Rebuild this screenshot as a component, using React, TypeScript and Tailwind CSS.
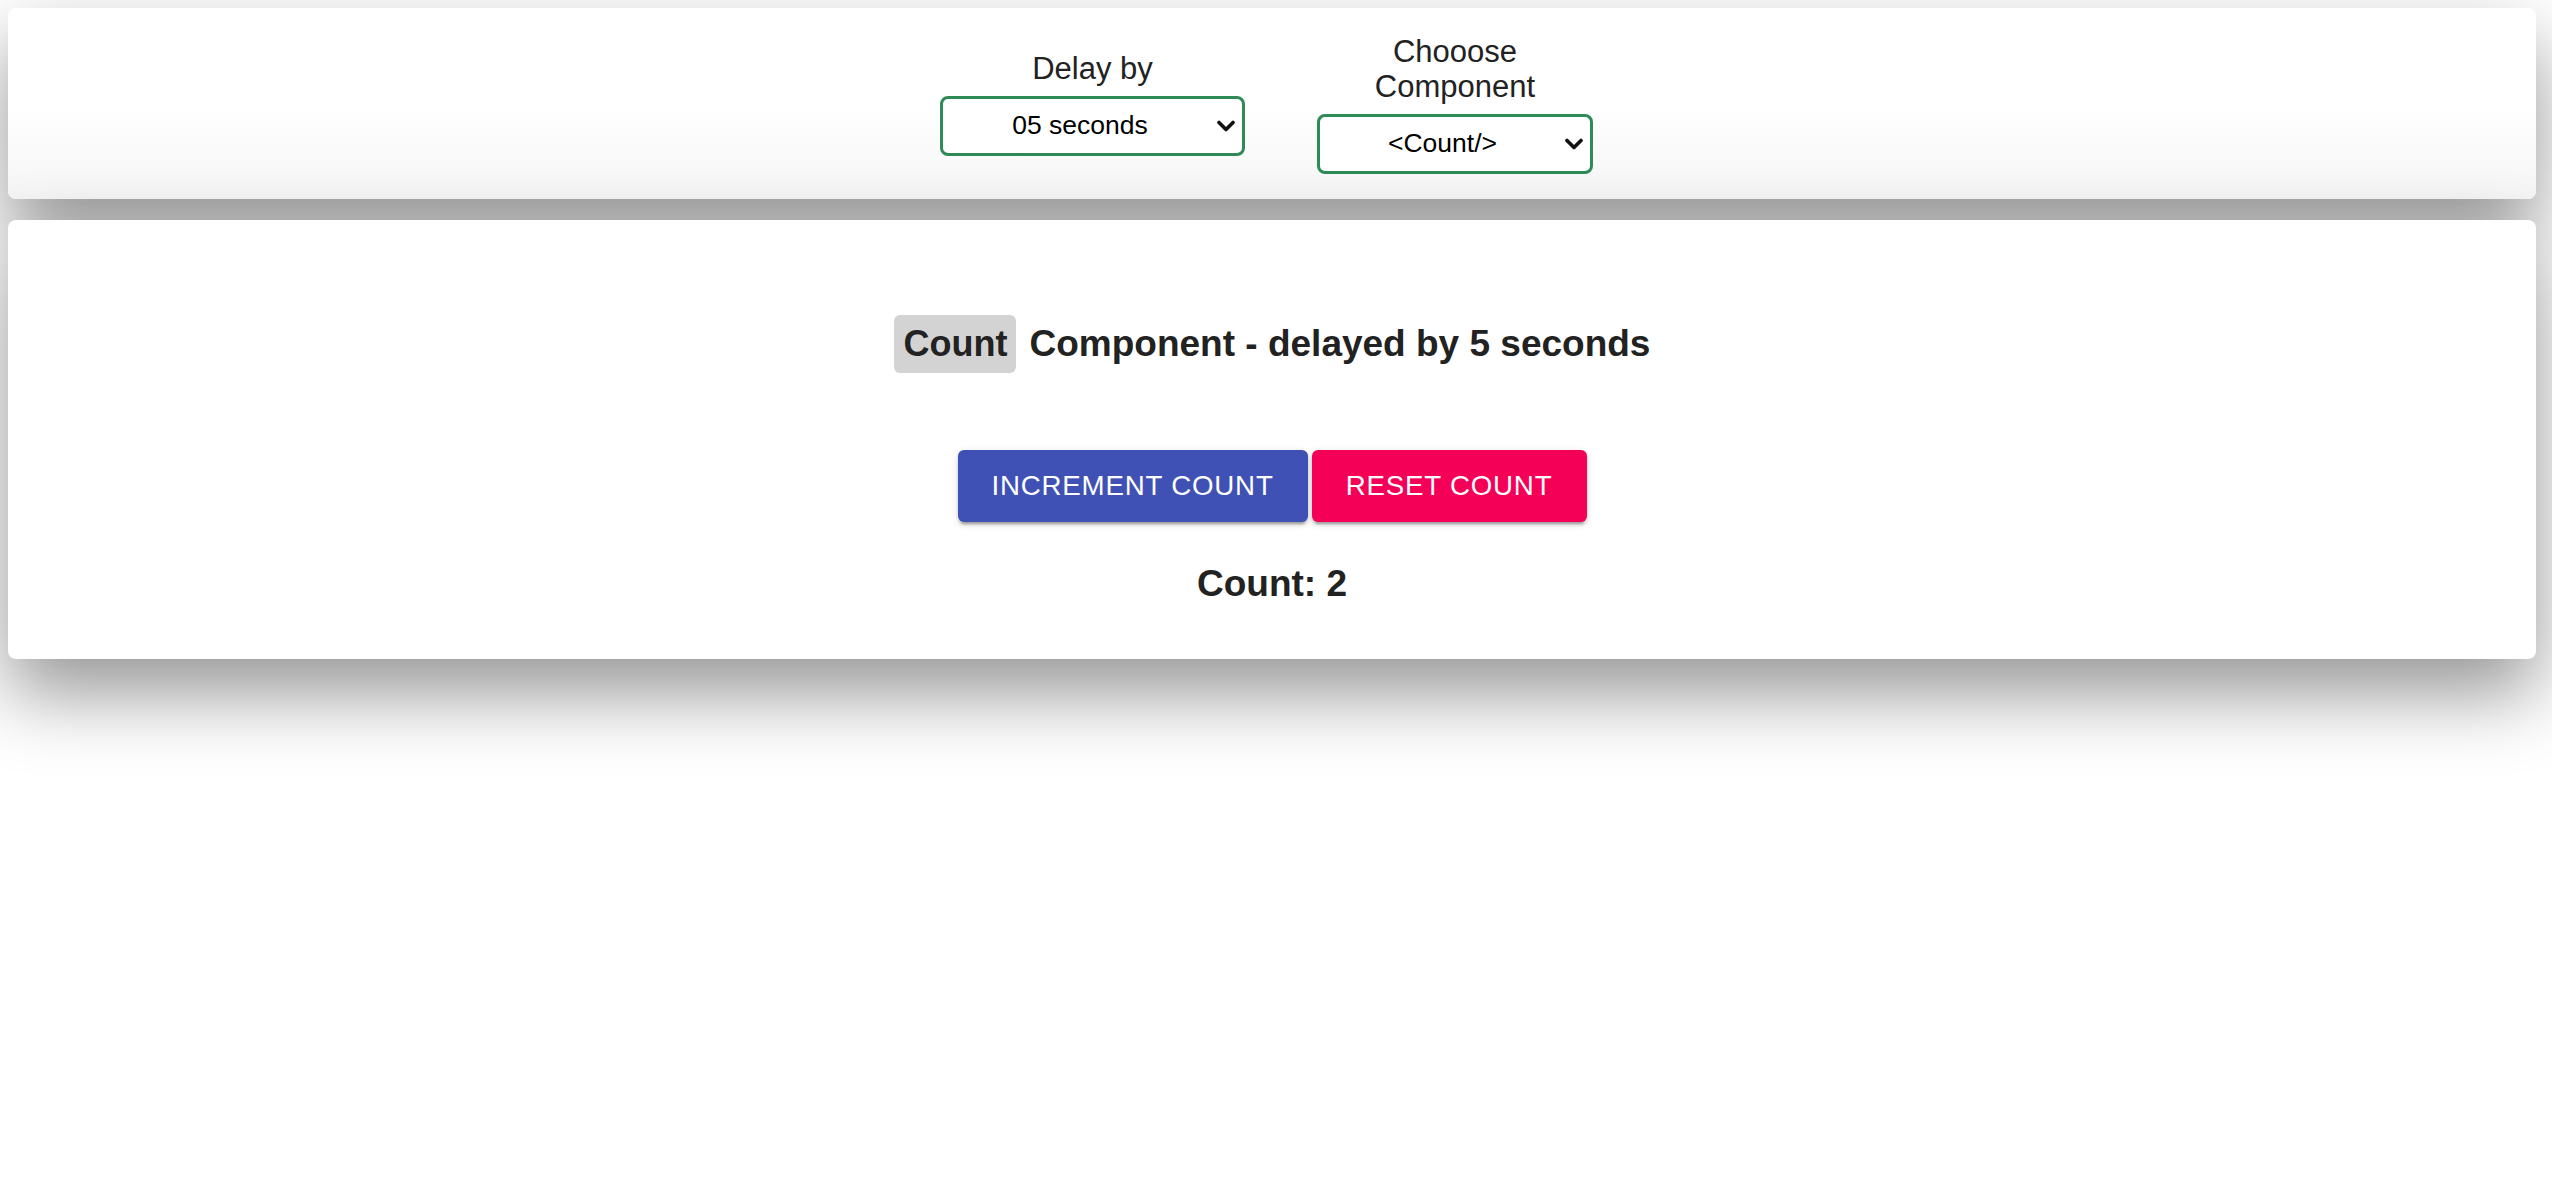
import { useState } from "react";

const font = { fontFamily: '"Liberation Sans", Arial, Helvetica, sans-serif' };

function Chevron() {
  return (
    <svg
      viewBox="0 0 18 12"
      className="pointer-events-none absolute right-[10px] top-1/2 h-[12px] w-[18px] -translate-y-1/2"
    >
      <path
        d="M2 2.5 L9 9.5 L16 2.5"
        fill="none"
        stroke="#111"
        strokeWidth="3.6"
        strokeLinecap="round"
        strokeLinejoin="round"
      />
    </svg>
  );
}

function Picker({
  label,
  value,
  options,
  width,
  onChange,
}: {
  label: string;
  value: string;
  options: { value: string; label: string }[];
  width: string;
  onChange: (v: string) => void;
}) {
  return (
    <div className={`flex flex-col items-center ${width}`}>
      <label className="text-center text-[31px] leading-[35px] text-[#222]">{label}</label>
      <div className="relative mt-[10px] w-full">
        <select
          value={value}
          onChange={(e) => onChange(e.target.value)}
          className="h-[60px] w-full appearance-none rounded-[8px] border-[3.5px] border-[#2e8b57] bg-white pl-[4px] pr-[29px] text-center text-[26.5px] text-black outline-none"
          style={font}
        >
          {options.map((o) => (
            <option key={o.value} value={o.value}>
              {o.label}
            </option>
          ))}
        </select>
        <Chevron />
      </div>
    </div>
  );
}

export default function App() {
  const [delay, setDelay] = useState("5");
  const [component, setComponent] = useState("count");
  const [count, setCount] = useState(2);

  return (
    <div className="min-h-screen bg-white pl-[8px] pr-[16px] pt-[8px]" style={font}>
      <div className="flex h-[191px] items-center justify-center gap-[72px] rounded-[8px] bg-gradient-to-b from-white via-white to-[#f5f5f5] pr-[11px] shadow-[0_34px_76px_rgba(0,0,0,0.42)]">
        <Picker
          label="Delay by"
          value={delay}
          width="w-[305px]"
          onChange={setDelay}
          options={[
            { value: "0", label: "00 seconds" },
            { value: "5", label: "05 seconds" },
            { value: "10", label: "10 seconds" },
          ]}
        />
        <Picker
          label="Chooose Component"
          value={component}
          width="w-[276px]"
          onChange={setComponent}
          options={[
            { value: "count", label: "<Count/>" },
            { value: "todo", label: "<Todo/>" },
          ]}
        />
      </div>

      <div className="relative mt-[21px] flex h-[439px] flex-col items-center rounded-[8px] bg-white pt-[95px] shadow-[0_34px_76px_rgba(0,0,0,0.42)]">
        <h2 className="flex items-center gap-[14px] text-[37px] font-bold text-[#222]">
          <span className="flex h-[58px] items-center rounded-[6px] bg-[#d3d3d3] pl-[10px] pr-[8px] text-[36px]">
            Count
          </span>
          <span>Component - delayed by {delay} seconds</span>
        </h2>

        <div className="mt-[77px] flex gap-[4px]">
          <button
            type="button"
            onClick={() => setCount((c) => c + 1)}
            className="h-[72px] w-[350px] rounded-[6px] bg-[#3f51b5] text-[27.7px] uppercase tracking-[0.8px] text-white shadow-[0_5px_2px_-3px_rgba(0,0,0,0.2),0_3px_3px_0_rgba(0,0,0,0.14),0_2px_8px_0_rgba(0,0,0,0.12)]"
          >
            Increment count
          </button>
          <button
            type="button"
            onClick={() => setCount(0)}
            className="h-[72px] w-[275px] rounded-[6px] bg-[#f50057] text-[27.7px] uppercase tracking-[0.8px] text-white shadow-[0_5px_2px_-3px_rgba(0,0,0,0.2),0_3px_3px_0_rgba(0,0,0,0.14),0_2px_8px_0_rgba(0,0,0,0.12)]"
          >
            Reset count
          </button>
        </div>

        <p className="mt-[40px] text-[37px] font-bold leading-[44px] text-[#222]">Count: {count}</p>
      </div>
    </div>
  );
}
